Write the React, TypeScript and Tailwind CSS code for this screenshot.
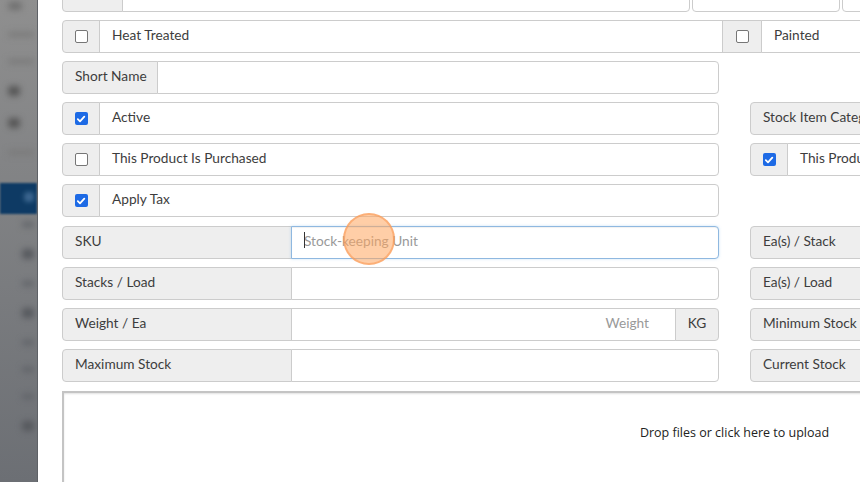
import React from "react";

const font = { fontFamily: "Lato, 'Open Sans', sans-serif" };

function Check({ checked }: { checked?: boolean }) {
  if (checked) {
    return (
      <span className="w-[13px] h-[13px] rounded-[2px] bg-[#1d6ae5] flex items-center justify-center">
        <svg width="10" height="10" viewBox="0 0 10 10">
          <path d="M1.8 5.2 L4 7.3 L8.3 2.6" fill="none" stroke="#fff" strokeWidth="1.8" strokeLinecap="round" strokeLinejoin="round" />
        </svg>
      </span>
    );
  }
  return <span className="w-[13px] h-[13px] rounded-[2px] border border-[#767676] bg-white" />;
}

function CheckRow({ label, checked }: { label: string; checked?: boolean }) {
  return (
    <div className="flex h-[33px] text-[13.7px] text-[#3d3d3d]">
      <div className="w-[38px] shrink-0 bg-[#eeeeee] border border-[#cccccc] rounded-l-[4px] flex items-center justify-center">
        <Check checked={checked} />
      </div>
      <div className="flex-1 -ml-px border border-[#cccccc] rounded-r-[4px] bg-white flex items-center pl-[12px] pb-[2px] whitespace-nowrap overflow-hidden">
        {label}
      </div>
    </div>
  );
}

function LabelRow({
  label,
  labelW,
  children,
  focus,
}: {
  label: string;
  labelW: string;
  children?: React.ReactNode;
  focus?: boolean;
}) {
  return (
    <div className="flex h-[33px] text-[13.7px] text-[#3d3d3d]">
      <div className={`${labelW} shrink-0 bg-[#eeeeee] border border-[#cccccc] rounded-l-[4px] flex items-center pl-[12px] pb-[2px] whitespace-nowrap overflow-hidden`}>
        {label}
      </div>
      <div
        className={
          focus
            ? "flex-1 -ml-px border border-[#8fb8e0] rounded-r-[4px] bg-white flex items-center pb-[2px] shadow-[inset_0_1px_1px_rgba(0,0,0,0.06),0_0_3px_rgba(102,175,233,0.35)] relative"
            : "flex-1 -ml-px border border-[#cccccc] rounded-r-[4px] bg-white flex items-center pb-[2px]"
        }
      >
        {children}
      </div>
    </div>
  );
}

function RightLabel({ label }: { label: string }) {
  return (
    <div className="flex h-[33px] text-[13.7px] text-[#3d3d3d]">
      <div className="flex-1 bg-[#eeeeee] border border-[#cccccc] rounded-l-[4px] flex items-center pl-[12px] pb-[2px] whitespace-nowrap">
        {label}
      </div>
    </div>
  );
}

export default function App() {
  return (
    <div className="w-[860px] h-[482px] overflow-hidden flex bg-white relative" style={font}>
      <div className="w-[38px] shrink-0 h-full bg-gradient-to-b from-[#8f8f8f] to-[#6c6f74] relative overflow-hidden border-r border-[#5e6166]">
        <div className="flex flex-col gap-[22px] pt-[2px] pl-[8px] blur-[3px]">
          <div className="w-[14px] h-[8px] bg-[#6f6f6f] rounded" />
          <div className="w-[26px] h-[5px] bg-[#7a7a7a] rounded" />
          <div className="w-[26px] h-[5px] bg-[#7a7a7a] rounded" />
          <div className="w-[12px] h-[10px] bg-[#555] rounded" />
          <div className="w-[12px] h-[10px] bg-[#555] rounded" />
          <div className="w-[26px] h-[5px] bg-[#7a7a7a] rounded" />
        </div>
        <div className="absolute left-0 top-[183px] w-full h-[31px] bg-[#0e3a64] blur-[1px]">
          <div className="ml-[24px] mt-[9px] w-[10px] h-[10px] bg-[#3d6790] rounded blur-[2px]" />
        </div>
        <div className="absolute left-[22px] top-[222px] flex flex-col gap-[22px] blur-[3px]">
          <div className="w-[12px] h-[5px] bg-[#5f6267] rounded" />
          <div className="w-[12px] h-[10px] bg-[#55585d] rounded" />
          <div className="w-[12px] h-[5px] bg-[#5f6267] rounded" />
          <div className="w-[12px] h-[10px] bg-[#55585d] rounded" />
          <div className="w-[12px] h-[5px] bg-[#5f6267] rounded" />
          <div className="w-[12px] h-[5px] bg-[#5f6267] rounded" />
          <div className="w-[12px] h-[5px] bg-[#5f6267] rounded" />
          <div className="w-[12px] h-[10px] bg-[#55585d] rounded" />
        </div>
      </div>

      <div className="flex-1 pl-[24px] mt-[-21px]">
        <div className="w-[1345px] grid grid-cols-[657px_657px] gap-x-[31px] gap-y-[8px]">
          {/* top partial row */}
          <div className="col-span-2 flex h-[33px]">
            <div className="w-[61px] shrink-0 bg-[#eeeeee] border border-[#cccccc] rounded-l-[4px]" />
            <div className="w-[568px] -ml-px border border-[#cccccc] rounded-r-[4px] bg-white" />
            <div className="w-[148px] ml-[2px] border border-[#cccccc] rounded-[4px] bg-white" />
            <div className="flex-1 ml-[2px] border border-[#cccccc] rounded-[4px] bg-white" />
          </div>

          {/* Heat treated / painted */}
          <div className="col-span-2 flex h-[33px] text-[13.7px] text-[#3d3d3d]">
            <div className="w-[38px] shrink-0 bg-[#eeeeee] border border-[#cccccc] rounded-l-[4px] flex items-center justify-center">
              <Check />
            </div>
            <div className="w-[624px] -ml-px border border-[#cccccc] bg-white flex items-center pl-[12px] pb-[2px]">
              Heat Treated
            </div>
            <div className="w-[40px] shrink-0 -ml-px bg-[#eeeeee] border border-[#cccccc] flex items-center justify-center">
              <Check />
            </div>
            <div className="flex-1 -ml-px border border-[#cccccc] rounded-r-[4px] bg-white flex items-center pl-[12px] pb-[2px]">
              Painted
            </div>
          </div>

          <LabelRow label="Short Name" labelW="w-[96px]" />
          <div />

          <CheckRow label="Active" checked />
          <RightLabel label="Stock Item Category" />

          <CheckRow label="This Product Is Purchased" />
          <CheckRow label="This Product Is Sold" checked />

          <CheckRow label="Apply Tax" checked />
          <div />

          <div className="mt-px">
            <LabelRow label="SKU" labelW="w-[230px]" focus>
              <span className="pl-[12px] text-[#999] relative">
                <span className="absolute left-[12px] top-[1px] w-px h-[16px] bg-[#333]" />
                Stock-keeping Unit
              </span>
            </LabelRow>
          </div>
          <div className="mt-px">
            <RightLabel label="Ea(s) / Stack" />
          </div>

          <LabelRow label="Stacks / Load" labelW="w-[230px]" />
          <RightLabel label="Ea(s) / Load" />

          <div className="flex h-[33px] text-[13.7px] text-[#3d3d3d]">
            <div className="w-[230px] shrink-0 bg-[#eeeeee] border border-[#cccccc] rounded-l-[4px] flex items-center pl-[12px] pb-[2px]">
              Weight / Ea
            </div>
            <div className="flex-1 -ml-px border border-[#cccccc] bg-white flex items-center justify-end pr-[26px] pb-[2px] text-[#999]">
              Weight
            </div>
            <div className="w-[44px] shrink-0 -ml-px bg-[#eeeeee] border border-[#cccccc] rounded-r-[4px] flex items-center justify-center pb-[2px]">
              KG
            </div>
          </div>
          <RightLabel label="Minimum Stock" />

          <LabelRow label="Maximum Stock" labelW="w-[230px]" />
          <RightLabel label="Current Stock" />

          <div className="col-span-2 mt-[1px] h-[140px] border-2 border-[#c4c4c4] bg-white shadow-[inset_0_1px_2px_rgba(0,0,0,0.12)] flex justify-center pt-[31px]">
            <span className="text-[12.5px] text-[#222]" style={{ fontFamily: "'Open Sans', sans-serif" }}>
              Drop files or click here to upload
            </span>
          </div>
        </div>
      </div>

      <div className="absolute left-[343px] top-[213px] w-[52px] h-[52px] rounded-full bg-[rgba(255,165,95,0.55)] border-2 border-[rgba(250,150,80,0.55)] pointer-events-none" />
    </div>
  );
}
